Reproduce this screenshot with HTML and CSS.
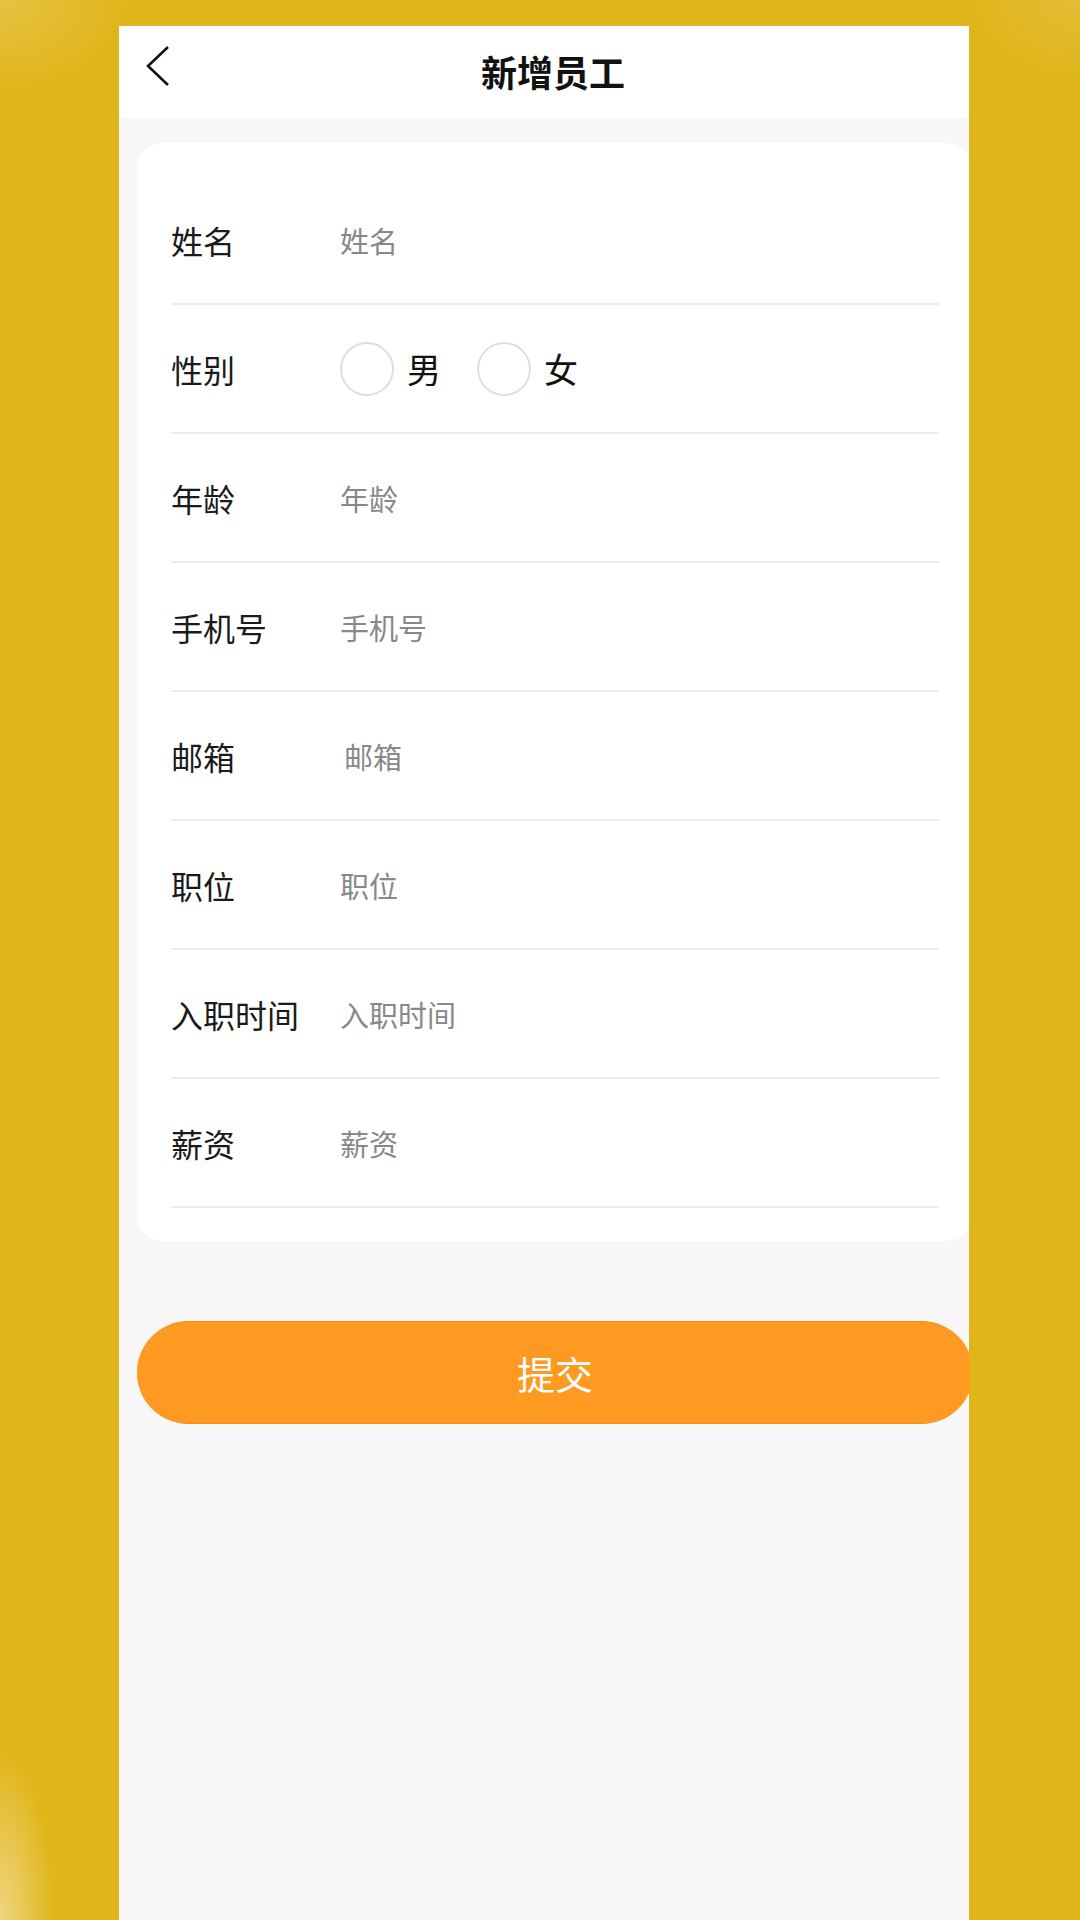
FILE: index.html
```html
<!DOCTYPE html>
<html lang="zh-CN">
<head>
<meta charset="utf-8">
<title>新增员工</title>
<link rel="stylesheet" href="styles.css">
</head>
<body>
<div class="phone">
  <header class="header">
    <svg class="back" width="26" height="42" viewBox="0 0 26 42" aria-hidden="true">
      <polyline points="23,2 3,21 23,40" fill="none" stroke="#111" stroke-width="2.6" stroke-linejoin="miter"/>
    </svg>
    <h1 class="title">新增员工</h1>
  </header>
  <main class="content">
    <form class="card">
      <div class="row"><span class="label">姓名</span><input class="field" placeholder="姓名"></div>
      <div class="row"><span class="label">性别</span>
        <div class="radios">
          <label class="radio"><span class="circle"></span><span class="radio-text">男</span></label>
          <label class="radio"><span class="circle"></span><span class="radio-text">女</span></label>
        </div>
      </div>
      <div class="row"><span class="label">年龄</span><input class="field" placeholder="年龄"></div>
      <div class="row"><span class="label">手机号</span><input class="field" placeholder="手机号"></div>
      <div class="row"><span class="label">邮箱</span><input class="field field-shift" placeholder="邮箱"></div>
      <div class="row"><span class="label">职位</span><input class="field" placeholder="职位"></div>
      <div class="row"><span class="label">入职时间</span><input class="field" placeholder="入职时间"></div>
      <div class="row"><span class="label">薪资</span><input class="field" placeholder="薪资"></div>
    </form>
    <button class="submit" type="button">提交</button>
  </main>
</div>
</body>
</html>
```

FILE: styles.css
```css
* { box-sizing: border-box; }
html, body { margin: 0; padding: 0; }
body {
  width: 1080px;
  height: 1920px;
  overflow: hidden;
  font-family: "Noto Sans CJK SC", "Noto Sans", sans-serif;
  background:
    radial-gradient(ellipse 130px 90px at 0 0, rgba(232, 196, 72, 0.9), rgba(232, 196, 72, 0) 100%),
    radial-gradient(ellipse 110px 80px at 1080px 0, rgba(230, 192, 66, 0.7), rgba(230, 192, 66, 0) 100%),
    radial-gradient(ellipse 55px 170px at 0 1920px, rgba(240, 214, 128, 1), rgba(240, 214, 128, 0) 100%),
    #dfb51a;
}
.phone {
  margin: 26px 0 0 119px;
  width: 850px;
  height: 1894px;
  background: #f7f7f7;
  overflow: hidden;
  display: flex;
  flex-direction: column;
}
.header {
  position: relative;
  height: 92px;
  background: #fff;
  flex: none;
  display: flex;
  align-items: center;
  padding-left: 18px;
}
.back {
  position: absolute;
  left: 26px;
  top: 19px;
}
.title {
  margin: 0;
  width: 838px;
  text-align: center;
  font-size: 36px;
  font-weight: 700;
  color: #111;
  line-height: 1;
  padding-bottom: 2px;
}
.content {
  padding-left: 18px;
  padding-top: 25px;
}
.card {
  width: 835px;
  background: #fff;
  border-radius: 26px;
  padding: 33px 33px 33px 34px;
  margin: 0;
}
.row {
  height: 129px;
  border-bottom: 2px solid #ececec;
  display: flex;
  align-items: center;
}
.label {
  width: 169px;
  flex: none;
  font-size: 32px;
  color: #1a1a1a;
  line-height: 1;
}
.field {
  flex: 1;
  border: none;
  outline: none;
  background: transparent;
  padding: 0;
  font-family: inherit;
  font-size: 29px;
  color: #333;
  height: 40px;
}
.field::placeholder { color: #888; }
.field-shift { padding-left: 4px; }
.radios {
  display: flex;
  align-items: center;
  gap: 36px;
}
.radio {
  display: flex;
  align-items: center;
  gap: 13px;
}
.circle {
  width: 54px;
  height: 54px;
  border-radius: 50%;
  border: 2px solid #dedede;
  background: #fff;
}
.radio-text {
  font-size: 34px;
  color: #111;
  line-height: 1;
}
.submit {
  display: block;
  margin-top: 80px;
  width: 836px;
  height: 103px;
  border-radius: 52px;
  border: none;
  border-top: 1px solid #f68f12;
  border-bottom: 1px solid #f68f12;
  background: #fe9a21;
  color: #fff;
  font-family: inherit;
  font-size: 38px;
  line-height: 1;
  padding: 0;
}
```
